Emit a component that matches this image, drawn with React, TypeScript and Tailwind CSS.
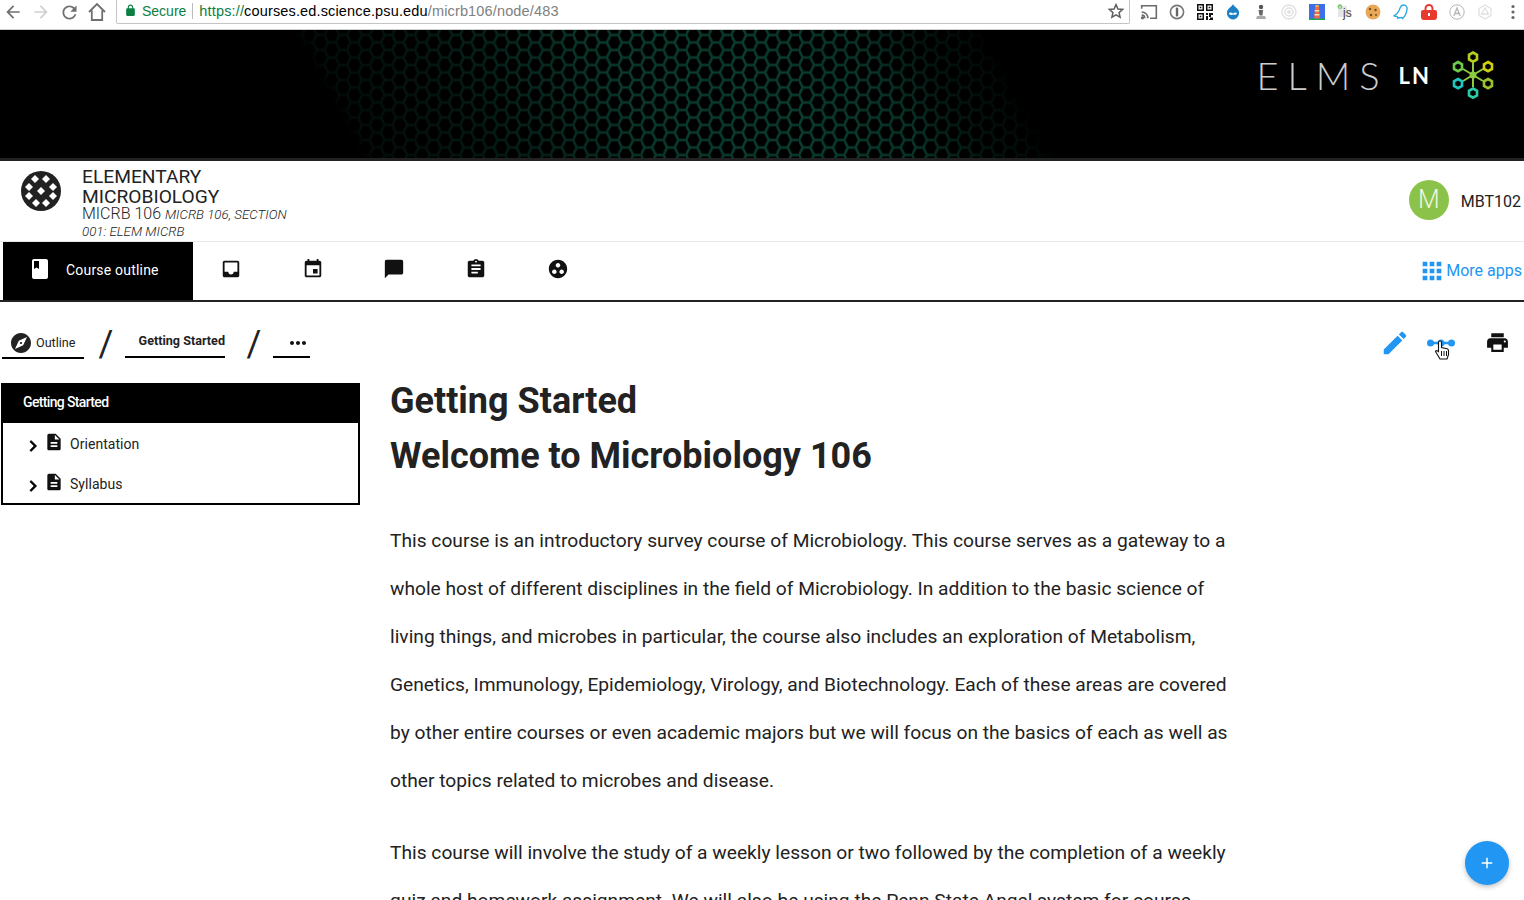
import React from "react";

const P = {
  book: "M18 2H6c-1.1 0-2 .9-2 2v16c0 1.1.9 2 2 2h12c1.1 0 2-.9 2-2V4c0-1.1-.9-2-2-2zM6 4h5v8l-2.5-1.5L6 12V4z",
  inbox: "M19 3H4.99c-1.11 0-1.98.89-1.98 2L3 19c0 1.1.88 2 1.99 2H19c1.1 0 2-.9 2-2V5c0-1.11-.9-2-2-2zm0 12h-4c0 1.66-1.35 3-3 3s-3-1.34-3-3H4.99V5H19v10z",
  event: "M17 12h-5v5h5v-5zM16 1v2H8V1H6v2H5c-1.11 0-1.99.9-1.99 2L3 19c0 1.1.89 2 2 2h14c1.1 0 2-.9 2-2V5c0-1.1-.9-2-2-2h-1V1h-2zm3 18H5V8h14v11z",
  chat: "M20 2H4c-1.1 0-1.99.9-1.99 2L2 22l4-4h14c1.1 0 2-.9 2-2V4c0-1.1-.9-2-2-2z",
  assignment: "M19 3h-4.18C14.4 1.84 13.3 1 12 1c-1.3 0-2.4.84-2.82 2H5c-1.1 0-2 .9-2 2v14c0 1.1.9 2 2 2h14c1.1 0 2-.9 2-2V5c0-1.1-.9-2-2-2zm-7 0c.55 0 1 .45 1 1s-.45 1-1 1-1-.45-1-1 .45-1 1-1zm2 14H7v-2h7v2zm3-4H7v-2h10v2zm0-4H7V7h10v2z",
  group: "M12 2C6.48 2 2 6.48 2 12s4.48 10 10 10 10-4.48 10-10S17.52 2 12 2zM8 17.5c-1.38 0-2.5-1.12-2.5-2.5s1.12-2.5 2.5-2.5 2.5 1.12 2.5 2.5-1.12 2.5-2.5 2.5zM9.5 8c0-1.38 1.12-2.5 2.5-2.5s2.5 1.12 2.5 2.5-1.12 2.5-2.5 2.5S9.5 9.38 9.5 8zm6.5 9.5c-1.38 0-2.5-1.12-2.5-2.5s1.12-2.5 2.5-2.5 2.5 1.12 2.5 2.5-1.12 2.5-2.5 2.5z",
  explore: "M12 10.9c-.61 0-1.1.49-1.1 1.1s.49 1.1 1.1 1.1c.61 0 1.1-.49 1.1-1.1s-.49-1.1-1.1-1.1zM12 2C6.48 2 2 6.48 2 12s4.48 10 10 10 10-4.48 10-10S17.52 2 12 2zm2.19 12.19L6 18l3.81-8.19L18 6l-3.81 8.19z",
  doc: "M14 2H6c-1.1 0-1.99.9-1.99 2L4 20c0 1.1.89 2 1.99 2H18c1.1 0 2-.9 2-2V8l-6-6zm2 16H8v-2h8v2zm0-4H8v-2h8v2zm-3-5V3.5L18.5 9H13z",
  apps: "M4 8h4V4H4v4zm6 12h4v-4h-4v4zm-6 0h4v-4H4v4zm0-6h4v-4H4v4zm6 0h4v-4h-4v4zm6-10v4h4V4h-4zm-6 4h4V4h-4v4zm6 6h4v-4h-4v4zm0 6h4v-4h-4v4z",
  edit: "M3 17.25V21h3.75L17.81 9.94l-3.75-3.75L3 17.25zM20.71 7.04c.39-.39.39-1.02 0-1.41l-2.34-2.34c-.39-.39-1.02-.39-1.41 0l-1.83 1.83 3.75 3.75 1.83-1.83z",
  print: "M19 8H5c-1.66 0-3 1.34-3 3v6h4v4h12v-4h4v-6c0-1.66-1.34-3-3-3zm-3 11H8v-5h8v5zm3-7c-.55 0-1-.45-1-1s.45-1 1-1 1 .45 1 1-.45 1-1 1zm-1-9H6v4h12V3z",
  more: "M6 10c-1.1 0-2 .9-2 2s.9 2 2 2 2-.9 2-2-.9-2-2-2zm12 0c-1.1 0-2 .9-2 2s.9 2 2 2 2-.9 2-2-.9-2-2-2zm-6 0c-1.1 0-2 .9-2 2s.9 2 2 2 2-.9 2-2-.9-2-2-2z",
  chevron: "M10 6L8.59 7.41 13.17 12l-4.58 4.59L10 18l6-6z",
  back: "M20 11H7.83l5.59-5.59L12 4l-8 8 8 8 1.41-1.41L7.83 13H20v-2z",
  forward: "M12 4l-1.41 1.41L16.17 11H4v2h12.17l-5.58 5.59L12 20l8-8z",
  reload: "M17.65 6.35C16.2 4.9 14.21 4 12 4c-4.42 0-7.99 3.58-7.99 8s3.57 8 7.99 8c3.73 0 6.84-2.55 7.73-6h-2.08c-.82 2.33-3.04 4-5.65 4-3.31 0-6-2.69-6-6s2.69-6 6-6c1.66 0 3.14.69 4.22 1.78L13 11h7V4l-2.35 2.35z",
  lock: "M18 8h-1V6c0-2.76-2.24-5-5-5S7 3.24 7 6v2H6c-1.1 0-2 .9-2 2v10c0 1.1.9 2 2 2h12c1.1 0 2-.9 2-2V10c0-1.1-.9-2-2-2zM9 6c0-1.66 1.34-3 3-3s3 1.34 3 3v2H9V6z",
  plus: "M19 13h-6v6h-2v-6H5v-2h6V5h2v6h6v2z",
};

function Icon({ d, className }: { d: string; className: string }) {
  return (
    <svg viewBox="0 0 24 24" className={className} fill="currentColor">
      <path d={d} />
    </svg>
  );
}

function ExtIcons() {
  const S = "w-4 h-4";
  return (
    <div className="flex items-center">
      <div className="w-[28px] flex justify-center">
        <svg viewBox="0 0 16 16" className="w-[18px] h-[18px]" fill="none" stroke="#6b6b6b" strokeWidth="1.4">
          <path d="M1.500 5V2.500h13v11H9" />
          <path d="M1.500 8a5.500 5.500 0 0 1 5.500 5.500M1.500 10.800a2.700 2.700 0 0 1 2.700 2.700" />
          <circle cx="2.200" cy="13.200" r=".8" fill="#6b6b6b" />
        </svg>
      </div>
      <div className="w-[28px] flex justify-center">
        <svg viewBox="0 0 16 16" className={S} fill="none">
          <circle cx="8" cy="8" r="6.6" stroke="#777" strokeWidth="1.6" />
          <rect x="6.8" y="3.6" width="2.4" height="8.8" rx="1" fill="#666" />
        </svg>
      </div>
      <div className="w-[28px] flex justify-center">
        <svg viewBox="0 0 16 16" className={S} fill="#111">
          <path d="M0 0h7v7H0zM9 0h7v7H9zM0 9h7v7H0z" />
          <path d="M1.5 1.5h4v4h-4zM10.5 1.5h4v4h-4zM1.5 10.5h4v4h-4z" fill="#fff" />
          <path d="M2.7 2.7h1.6v1.6H2.7zM11.7 2.7h1.6v1.6h-1.6zM2.7 11.7h1.6v1.6H2.7zM9 9h2v2H9zM12 9h4v2h-2v2h-2zM9 12h2v4H9zM13 13.5h3V16h-4v-1h1z" />
        </svg>
      </div>
      <div className="w-[28px] flex justify-center">
        <svg viewBox="0 0 16 16" className={S}>
          <path d="M8 0c.6 2 4 3.600 5.600 6.600C15.300 10.300 12.600 15.500 8 15.500S.7 10.300 2.400 6.600C4 3.600 7.400 2 8 0z" fill="#1b81c4" />
          <path d="M3.800 9.500c1.500-1.800 2.800-.8 4.200 0 1.300-.8 3-1.800 4 .1-.5 1.200-2 1.500-4 1-1.700.6-3.600.4-4.200-1.100z" fill="#fff" />
        </svg>
      </div>
      <div className="w-[28px] flex justify-center">
        <svg viewBox="0 0 16 16" className={S}>
          <circle cx="8" cy="3" r="2.200" fill="#555" />
          <path d="M5.500 6h4.500l-.5 5.500h-3z" fill="#666" />
          <path d="M4 12h8l1 3H3z" fill="#aaa" />
        </svg>
      </div>
      <div className="w-[28px] flex justify-center">
        <svg viewBox="0 0 16 16" className={S} fill="none" stroke="#e2e2e2" strokeWidth="1.500">
          <circle cx="8" cy="8" r="7" />
          <circle cx="8" cy="8" r="4" />
          <circle cx="8" cy="8" r="1.200" fill="#ddd" />
        </svg>
      </div>
      <div className="w-[28px] flex justify-center">
        <svg viewBox="0 0 16 16" className={S}>
          <rect width="16" height="16" fill="#3f6fe8" />
          <path d="M0 14.500h16V16H0z" fill="#19a94b" />
          <path d="M6 3h4l.8 11.500H5.200z" fill="#ec6b4a" />
          <path d="M5.800 6h4.400v1.600H5.800zM5.600 10h4.800v1.600H5.600z" fill="#f5e6a0" />
          <path d="M6.300 1h3.400v2H6.300z" fill="#f3b13c" />
        </svg>
      </div>
      <div className="w-[28px] flex justify-center relative">
        <svg viewBox="0 0 16 16" className={S}>
          <path d="M1 2h9v5h4v6H1z" fill="#e6e6e6" />
          <circle cx="3" cy="2.600" r="2.400" fill="#7cc576" />
          <path d="M2 2.700l1 .9 1.300-1.700" stroke="#fff" fill="none" strokeWidth=".8" />
        </svg>
        <span className="absolute left-[12px] top-[3px] text-[12px] leading-[12px] text-[#444] [font-family:'Liberation_Sans',sans-serif]">js</span>
      </div>
      <div className="w-[28px] flex justify-center">
        <svg viewBox="0 0 16 16" className={S}>
          <circle cx="8" cy="8" r="7.500" fill="#e8a85a" />
          <circle cx="5" cy="5" r="1.200" fill="#7a4a1e" />
          <circle cx="10.500" cy="6" r="1.200" fill="#7a4a1e" />
          <circle cx="6" cy="11" r="1.200" fill="#7a4a1e" />
          <circle cx="11" cy="11" r="1" fill="#7a4a1e" />
        </svg>
      </div>
      <div className="w-[28px] flex justify-center">
        <svg viewBox="0 0 16 16" className={S} fill="#fff" stroke="#29a8e0" strokeWidth="1.300">
          <path d="M10.500 1c2.500 0 4 2 3.500 4.500-.4 2.200-.6 3.300-1.400 5-.8 1.700-1.600 2.800-2.900 4-.6-.8-1.200-1.100-2-1-1 .1-2 .5-2.800.8.200-.9 0-1.500-1.300-1.800-.9-.2-1.800-.3-2.600-.6 2.200-1.300 4.300-3.300 5.300-6C7.100 3.400 8.200 1 10.500 1z" />
        </svg>
      </div>
      <div className="w-[28px] flex justify-center">
        <svg viewBox="0 0 16 16" className={S}>
          <path d="M4.500 6V4.500a3.500 3.500 0 0 1 7 0V6" fill="none" stroke="#e8392e" strokeWidth="2" />
          <path d="M2 6h12a2 2 0 0 1 2 2v5a3 3 0 0 1-3 3H3a3 3 0 0 1-3-3V8a2 2 0 0 1 2-2z" fill="#e8392e" />
          <rect x="7" y="9" width="2" height="3" fill="#fff" />
        </svg>
      </div>
      <div className="w-[28px] flex justify-center">
        <svg viewBox="0 0 16 16" className={S} fill="none" stroke="#b5b5b5" strokeWidth="1">
          <circle cx="8" cy="8" r="7.200" />
          <path d="M4.800 12L8 4l3.200 8M6 9.500h4" strokeWidth="1.300" />
        </svg>
      </div>
      <div className="w-[28px] flex justify-center">
        <svg viewBox="0 0 16 16" className={S} fill="none" stroke="#e0e0e0" strokeWidth="1.300">
          <path d="M8 1l6 3.500v7L8 15l-6-3.500v-7z" />
          <path d="M8 4l3.500 6h-7z" />
        </svg>
      </div>
      <div className="w-[28px] flex justify-center">
        <svg viewBox="0 0 16 16" className={S} fill="#666">
          <circle cx="8" cy="2.500" r="1.600" />
          <circle cx="8" cy="8" r="1.600" />
          <circle cx="8" cy="13.500" r="1.600" />
        </svg>
      </div>
    </div>
  );
}

function ChromeBar() {
  return (
    <div className="h-[30px] bg-white border-b border-b-[#cfcfcf] flex items-start [font-family:'Liberation_Sans',sans-serif]">
      <div className="flex items-center h-[24px] w-[116px] shrink-0">
        <Icon d={P.back} className="w-[20px] h-[20px] ml-[3px] text-[#6f6f6f]" />
        <Icon d={P.forward} className="w-[20px] h-[20px] ml-[8px] text-[#d0d0d0]" />
        <Icon d={P.reload} className="w-[21px] h-[21px] ml-[8px] text-[#6f6f6f]" />
        <svg viewBox="0 0 20 20" className="w-[20px] h-[20px] ml-[7px]" fill="none" stroke="#6f6f6f" strokeWidth="1.800">
          <path d="M2 10l8-8 8 8M4.800 8.500V18h10.400V8.500" />
        </svg>
      </div>
      <div className="w-[1014px] shrink-0 h-[24px] border border-t-0 border-[#c4c4c4] rounded-b-[2px] flex items-center text-[14.5px] leading-[20px] pb-[2px]">
        <Icon d={P.lock} className="w-[13px] h-[13px] ml-[7px] text-[#0b8043]" />
        <span className="ml-[5px] text-[14px] text-[#0b8043]">Secure</span>
        <span className="ml-[6px] mr-[6px] w-px h-[16px] bg-[#bdbdbd]" />
        <span className="text-[#0b8043] tracking-[0.15px]">https://</span>
        <span className="text-black tracking-[0.15px]">courses.ed.science.psu.edu</span>
        <span className="text-[#808080] tracking-[0.15px]">/micrb106/node/483</span>
        <svg viewBox="0 0 24 24" className="w-[18px] h-[18px] ml-auto mr-[4px]" fill="none" stroke="#5f5f5f" strokeWidth="2">
          <path d="M12 3.500l2.600 5.800 6.300.6-4.800 4.200 1.400 6.200-5.500-3.200-5.500 3.200 1.400-6.200-4.800-4.200 6.300-.6z" />
        </svg>
      </div>
      <div className="h-[24px] ml-[5px] flex items-center shrink-0">
        <ExtIcons />
      </div>
    </div>
  );
}

function Banner() {
  return (
    <div className="relative h-[131px] bg-black border-b-[3px] border-b-[#222222] flex items-start justify-end">
      <svg className="absolute inset-0 w-full h-full" width="1524" height="128">
        <defs>
          <pattern id="hex" width="22.6" height="15" patternUnits="userSpaceOnUse" x="8" y="-2.500">
            <path d="M0 7.500L3.750 0H11.250L15 7.500L11.250 15H3.750ZM15 7.500H22.600" fill="none" stroke="#0a3d30" strokeWidth="2.600" />
          </pattern>
          <linearGradient id="fade" gradientUnits="userSpaceOnUse" x1="0" y1="0" x2="1524" y2="0" gradientTransform="skewX(29)">
            <stop offset="0.192" stopColor="#000" stopOpacity="1" />
            <stop offset="0.2" stopColor="#000" stopOpacity="0.8" />
            <stop offset="0.27" stopColor="#000" stopOpacity="0.62" />
            <stop offset="0.33" stopColor="#000" stopOpacity="0.35" />
            <stop offset="0.39" stopColor="#000" stopOpacity="0.05" />
            <stop offset="0.5" stopColor="#000" stopOpacity="0" />
            <stop offset="0.56" stopColor="#000" stopOpacity="0.15" />
            <stop offset="0.6" stopColor="#000" stopOpacity="0.65" />
            <stop offset="0.635" stopColor="#000" stopOpacity="0.85" />
            <stop offset="0.645" stopColor="#000" stopOpacity="1" />
          </linearGradient>
        </defs>
        <rect width="1524" height="128" fill="url(#hex)" />
        <rect width="1524" height="128" fill="url(#fade)" />
      </svg>
      <div className="relative flex items-center mt-[21px] mr-[29px] h-[48px]">
        <span className="text-[38px] leading-[48px] tracking-[9px] text-[#cccccc] font-light [font-family:Lato,sans-serif]">ELMS</span>
        <span className="ml-[10px] pt-[1px] text-[22px] leading-[24px] font-bold tracking-[2px] text-white [font-family:Lato,sans-serif]">LN</span>
        <svg viewBox="0 0 44 48" className="w-[44px] h-[48px] ml-[20px]" fill="none" strokeWidth="2.600">
          <path d="M22 24L22 12M22 24L32 18M22 24L32 30M22 24L22 36M22 24L12 30M22 24L12 18" stroke="#8ccb3f" strokeWidth="2" />
          <circle cx="22" cy="24" r="3.500" fill="#8ccb3f" />
          <path d="M22 1.500l4 2.300v4.600l-4 2.300-4-2.300V3.800z" stroke="#b7cf1c" />
          <path d="M37 11l4 2.300v4.600l-4 2.300-4-2.300v-4.600z" stroke="#cfd010" />
          <path d="M37 28l4 2.300v4.600l-4 2.300-4-2.300v-4.600z" stroke="#9cc42a" />
          <path d="M22 37.500l4 2.300v4.600l-4 2.300-4-2.300v-4.600z" stroke="#28cfa8" />
          <path d="M7 28l4 2.300v4.600l-4 2.300-4-2.300v-4.600z" stroke="#1ec8c0" />
          <path d="M7 11l4 2.300v4.600l-4 2.300-4-2.300v-4.600z" stroke="#6fcb4a" />
        </svg>
      </div>
    </div>
  );
}

function CourseHeader() {
  const dots = [
    [35, 179], [46, 179], [29, 187], [53, 187], [41, 191], [29, 196], [53, 196], [36, 203], [46, 203],
  ];
  return (
    <div className="h-[81px] border-b border-b-[#e8e8e8] flex items-start">
      <svg viewBox="21 171 40 40" className="w-[40px] h-[40px] ml-[21px] mt-[10px]">
        <circle cx="41" cy="191" r="20" fill="#222222" />
        {dots.map(([x, y]) => (
          <path key={`${x}-${y}`} d={`M${x} ${y - 4}l4 4-4 4-4-4z`} fill="#fff" />
        ))}
      </svg>
      <div className="ml-[21px] mt-[6px] w-[215px] text-[#222222]">
        <div className="text-[19.2px] leading-[19.5px]">ELEMENTARY MICROBIOLOGY</div>
        <div className="text-[16px] leading-[17px] font-light -mt-[1px]">
          MICRB 106 <span className="text-[13.3px] leading-[12px] italic">MICRB 106, SECTION 001: ELEM MICRB</span>
        </div>
      </div>
      <div className="ml-auto flex items-center h-[40px] mt-[19px] mr-[3px]">
        <div className="w-[40px] h-[40px] rounded-full bg-[#8bc34a] text-[#eef6e2] text-[25px] leading-[40px] text-center font-light">M</div>
        <span className="ml-[12px] text-[16px] text-[#222222] pt-[3px]">MBT102</span>
      </div>
    </div>
  );
}

function NavBar() {
  const items = [P.inbox, P.event, P.chat, P.assignment, P.group];
  return (
    <div className="h-[60px] border-b-2 border-b-[#222222] flex items-stretch">
      <div className="ml-[3px] w-[190px] bg-black text-white flex items-center">
        <Icon d={P.book} className="w-[24px] h-[24px] ml-[25px] mb-[5px]" />
        <span className="ml-[14px] text-[14px] tracking-[0.2px] pb-[2px]">Course outline</span>
      </div>
      <div className="flex items-center ml-[-3px] pb-[5px]">
        {items.map((d, i) => (
          <div key={i} className="w-[81.700px] flex justify-center">
            <Icon d={d} className="w-[22px] h-[22px] text-[#111111]" />
          </div>
        ))}
      </div>
      <div className="ml-auto flex items-center mr-[2px] text-[#2196f3]">
        <Icon d={P.apps} className="w-[28px] h-[28px]" />
        <span className="text-[16px] ml-[0px]">More apps</span>
      </div>
    </div>
  );
}

function Crumbs() {
  return (
    <div className="h-[81px] flex items-center justify-between">
      <div className="flex items-start ml-[2px] text-[12.6px] text-[#222222] mt-[2px]">
        <div className="w-[82px] h-[30px] border-b-2 border-b-black flex items-center pt-[1px]">
          <Icon d={P.explore} className="w-[24px] h-[24px] ml-[7px]" />
          <span className="ml-[3px]">Outline</span>
        </div>
        <div className="w-[41px] pl-[3px] text-center text-[36px] leading-[30px] text-[#222222] font-normal">/</div>
        <div className="w-[100px] h-[29px] border-b-2 border-b-black flex items-center justify-end font-bold pb-[1px]">Getting Started</div>
        <div className="w-[48px] pl-[10px] text-center text-[36px] leading-[30px] text-[#222222] font-normal">/</div>
        <div className="w-[37px] h-[29px] border-b-2 border-b-black flex items-center justify-center pt-[1px]">
          <Icon d={P.more} className="w-[24px] h-[24px] ml-[13px] text-[#111111] shrink-0" />
        </div>
      </div>
      <div className="flex items-center mr-[14.500px] relative h-[30px]">
        <Icon d={P.edit} className="w-[30px] h-[30px] text-[#2196f3]" />
        <svg viewBox="0 0 28 10" className="w-[28px] h-[10px] ml-[17px]">
          <path d="M4 5h20" stroke="#2196f3" strokeWidth="2.500" />
          <circle cx="3.500" cy="5" r="3.500" fill="#2196f3" />
          <circle cx="14" cy="5" r="3.500" fill="#2196f3" />
          <circle cx="24.500" cy="5" r="3.500" fill="#2196f3" />
        </svg>
        <svg viewBox="0 0 16 20" className="absolute left-[54px] top-[12px] w-[16px] h-[20px]">
          <path d="M6 1c.9 0 1.500.6 1.500 1.500v5l5.500 1.200c1 .2 1.500 1 1.500 2v4l-1.500 4.300h-7L1.500 11.500c.5-1.200 2-1 3 0V2.500C4.500 1.600 5 1 6 1z" fill="#fff" stroke="#111" strokeWidth="1.100" />
          <path d="M7.500 11v5M10 11v5M12.500 11v5" stroke="#111" strokeWidth="1" />
        </svg>
        <Icon d={P.print} className="w-[25px] h-[25px] ml-[29.500px] text-[#111111]" />
      </div>
    </div>
  );
}

function Row({ label }: { label: string }) {
  return (
    <div className="h-[40px] flex items-center text-[14px] text-[#222222] pt-[2px]">
      <Icon d={P.chevron} className="w-[22px] h-[22px] ml-[19px] mt-[3px] text-black stroke-current stroke-[0.7px]" />
      <Icon d={P.doc} className="w-[20px] h-[20px] mb-[4px] text-[#111111]" />
      <span className="ml-[6px] tracking-[0.05px]">{label}</span>
    </div>
  );
}

function Sidebar() {
  return (
    <div className="ml-[1px] w-[359px] h-[122px] border-2 border-black shrink-0">
      <div className="h-[38px] bg-black text-white text-[14px] leading-[35px] pl-[20px] font-medium tracking-[-0.650px]">Getting Started</div>
      <Row label="Orientation" />
      <Row label="Syllabus" />
    </div>
  );
}

function Content() {
  return (
    <div className="ml-[30px] w-[845px] text-[#222222] shrink-0">
      <h1 className="text-[36px] leading-[55px] font-bold -mt-[9px]">Getting Started</h1>
      <h2 className="text-[36px] leading-[55px] font-bold">Welcome to Microbiology 106</h2>
      <p className="mt-[33px] text-[19.2px] leading-[48px]">
        This course is an introductory survey course of Microbiology. This course serves as a gateway to a whole host of different disciplines in the field of Microbiology. In addition to the basic science of living things, and microbes in particular, the course also includes an exploration of Metabolism, Genetics, Immunology, Epidemiology, Virology, and Biotechnology. Each of these areas are covered by other entire courses or even academic majors but we will focus on the basics of each as well as other topics related to microbes and disease.
      </p>
      <p className="mt-[24px] text-[19.2px] leading-[48px]">
        This course will involve the study of a weekly lesson or two followed by the completion of a weekly quiz and homework assignment. We will also be using the Penn State Angel system for course
      </p>
    </div>
  );
}

export default function App() {
  return (
    <div className="relative h-[900px] w-[1524px] overflow-hidden bg-white [font-family:Roboto,sans-serif]">
      <ChromeBar />
      <Banner />
      <CourseHeader />
      <NavBar />
      <Crumbs />
      <div className="flex items-start">
        <Sidebar />
        <Content />
      </div>
      <button className="absolute left-[1465px] top-[841px] w-[44px] h-[44px] rounded-full bg-[#2196f3] text-white flex items-center justify-center shadow-[0_2px_5px_rgba(0,0,0,0.25)]">
        <Icon d={P.plus} className="w-[18px] h-[18px]" />
      </button>
    </div>
  );
}
